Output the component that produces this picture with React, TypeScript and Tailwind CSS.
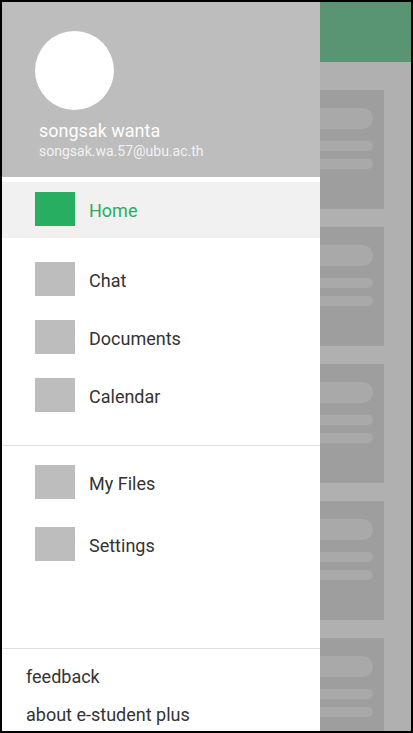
type ItemProps = { label: string; active?: boolean };

function MenuItem({ label, active = false }: ItemProps) {
  return (
    <a className={`flex h-[34px] items-center gap-3.5 pl-[33px] ${active ? "text-[#27ae60]" : "text-[#333333]"}`}>
      <span className={`h-[34px] w-10 shrink-0 ${active ? "bg-[#27ae60]" : "bg-[#bdbdbd]"}`} />
      <span className="pt-0.5 text-[18px] leading-[21px] whitespace-nowrap">{label}</span>
    </a>
  );
}

function Card() {
  return (
    <div className="h-[119px] w-16 shrink-0 bg-[#9e9e9e] pt-[18px] pr-[11px]">
      <div className="h-[21px] rounded-r-full bg-[#a9a9a9]" />
      <div className="mt-3 h-2.5 rounded-r-full bg-[#a9a9a9]" />
      <div className="mt-2 h-2.5 rounded-r-full bg-[#a9a9a9]" />
    </div>
  );
}

export default function App() {
  return (
    <div className="flex h-[733px] w-[413px] overflow-hidden border-2 border-black bg-[#b0b0b0] font-[Roboto,sans-serif]">
      <aside className="flex w-[318px] shrink-0 flex-col bg-white">
        <header className="h-[175px] shrink-0 bg-[#bdbdbd] pt-[29px] pl-[33px]">
          <div className="size-[79px] rounded-full bg-white" />
          <div className="mt-2.5 pl-1 text-[18px] leading-[21px] text-white">songsak wanta</div>
          <div className="mt-0.5 pl-1 text-[14px] leading-4 text-[#f2f2f2]">songsak.wa.57@ubu.ac.th</div>
        </header>
        <nav className="flex flex-col">
          <div className="mt-[5px] h-14 bg-[#f1f1f1] pt-2.5">
            <MenuItem label="Home" active />
          </div>
          <div className="flex h-[207px] flex-col gap-6 pt-6">
            <MenuItem label="Chat" />
            <MenuItem label="Documents" />
            <MenuItem label="Calendar" />
          </div>
          <div className="flex h-[203px] flex-col gap-7 border-t border-[#e0e0e0] pt-[19px]">
            <MenuItem label="My Files" />
            <MenuItem label="Settings" />
          </div>
        </nav>
        <footer className="flex flex-1 flex-col gap-[17px] border-t border-[#e0e0e0] pt-[17px] pl-6 text-[18px] leading-[21px] text-[#333333]">
          <a>feedback</a>
          <a>about e-student plus</a>
        </footer>
      </aside>
      <main className="flex min-w-0 flex-1 flex-col">
        <div className="h-[60px] shrink-0 bg-[#599473]" />
        <div className="flex flex-col gap-[18px] pt-7">
          <Card />
          <Card />
          <Card />
          <Card />
          <Card />
        </div>
      </main>
    </div>
  );
}
